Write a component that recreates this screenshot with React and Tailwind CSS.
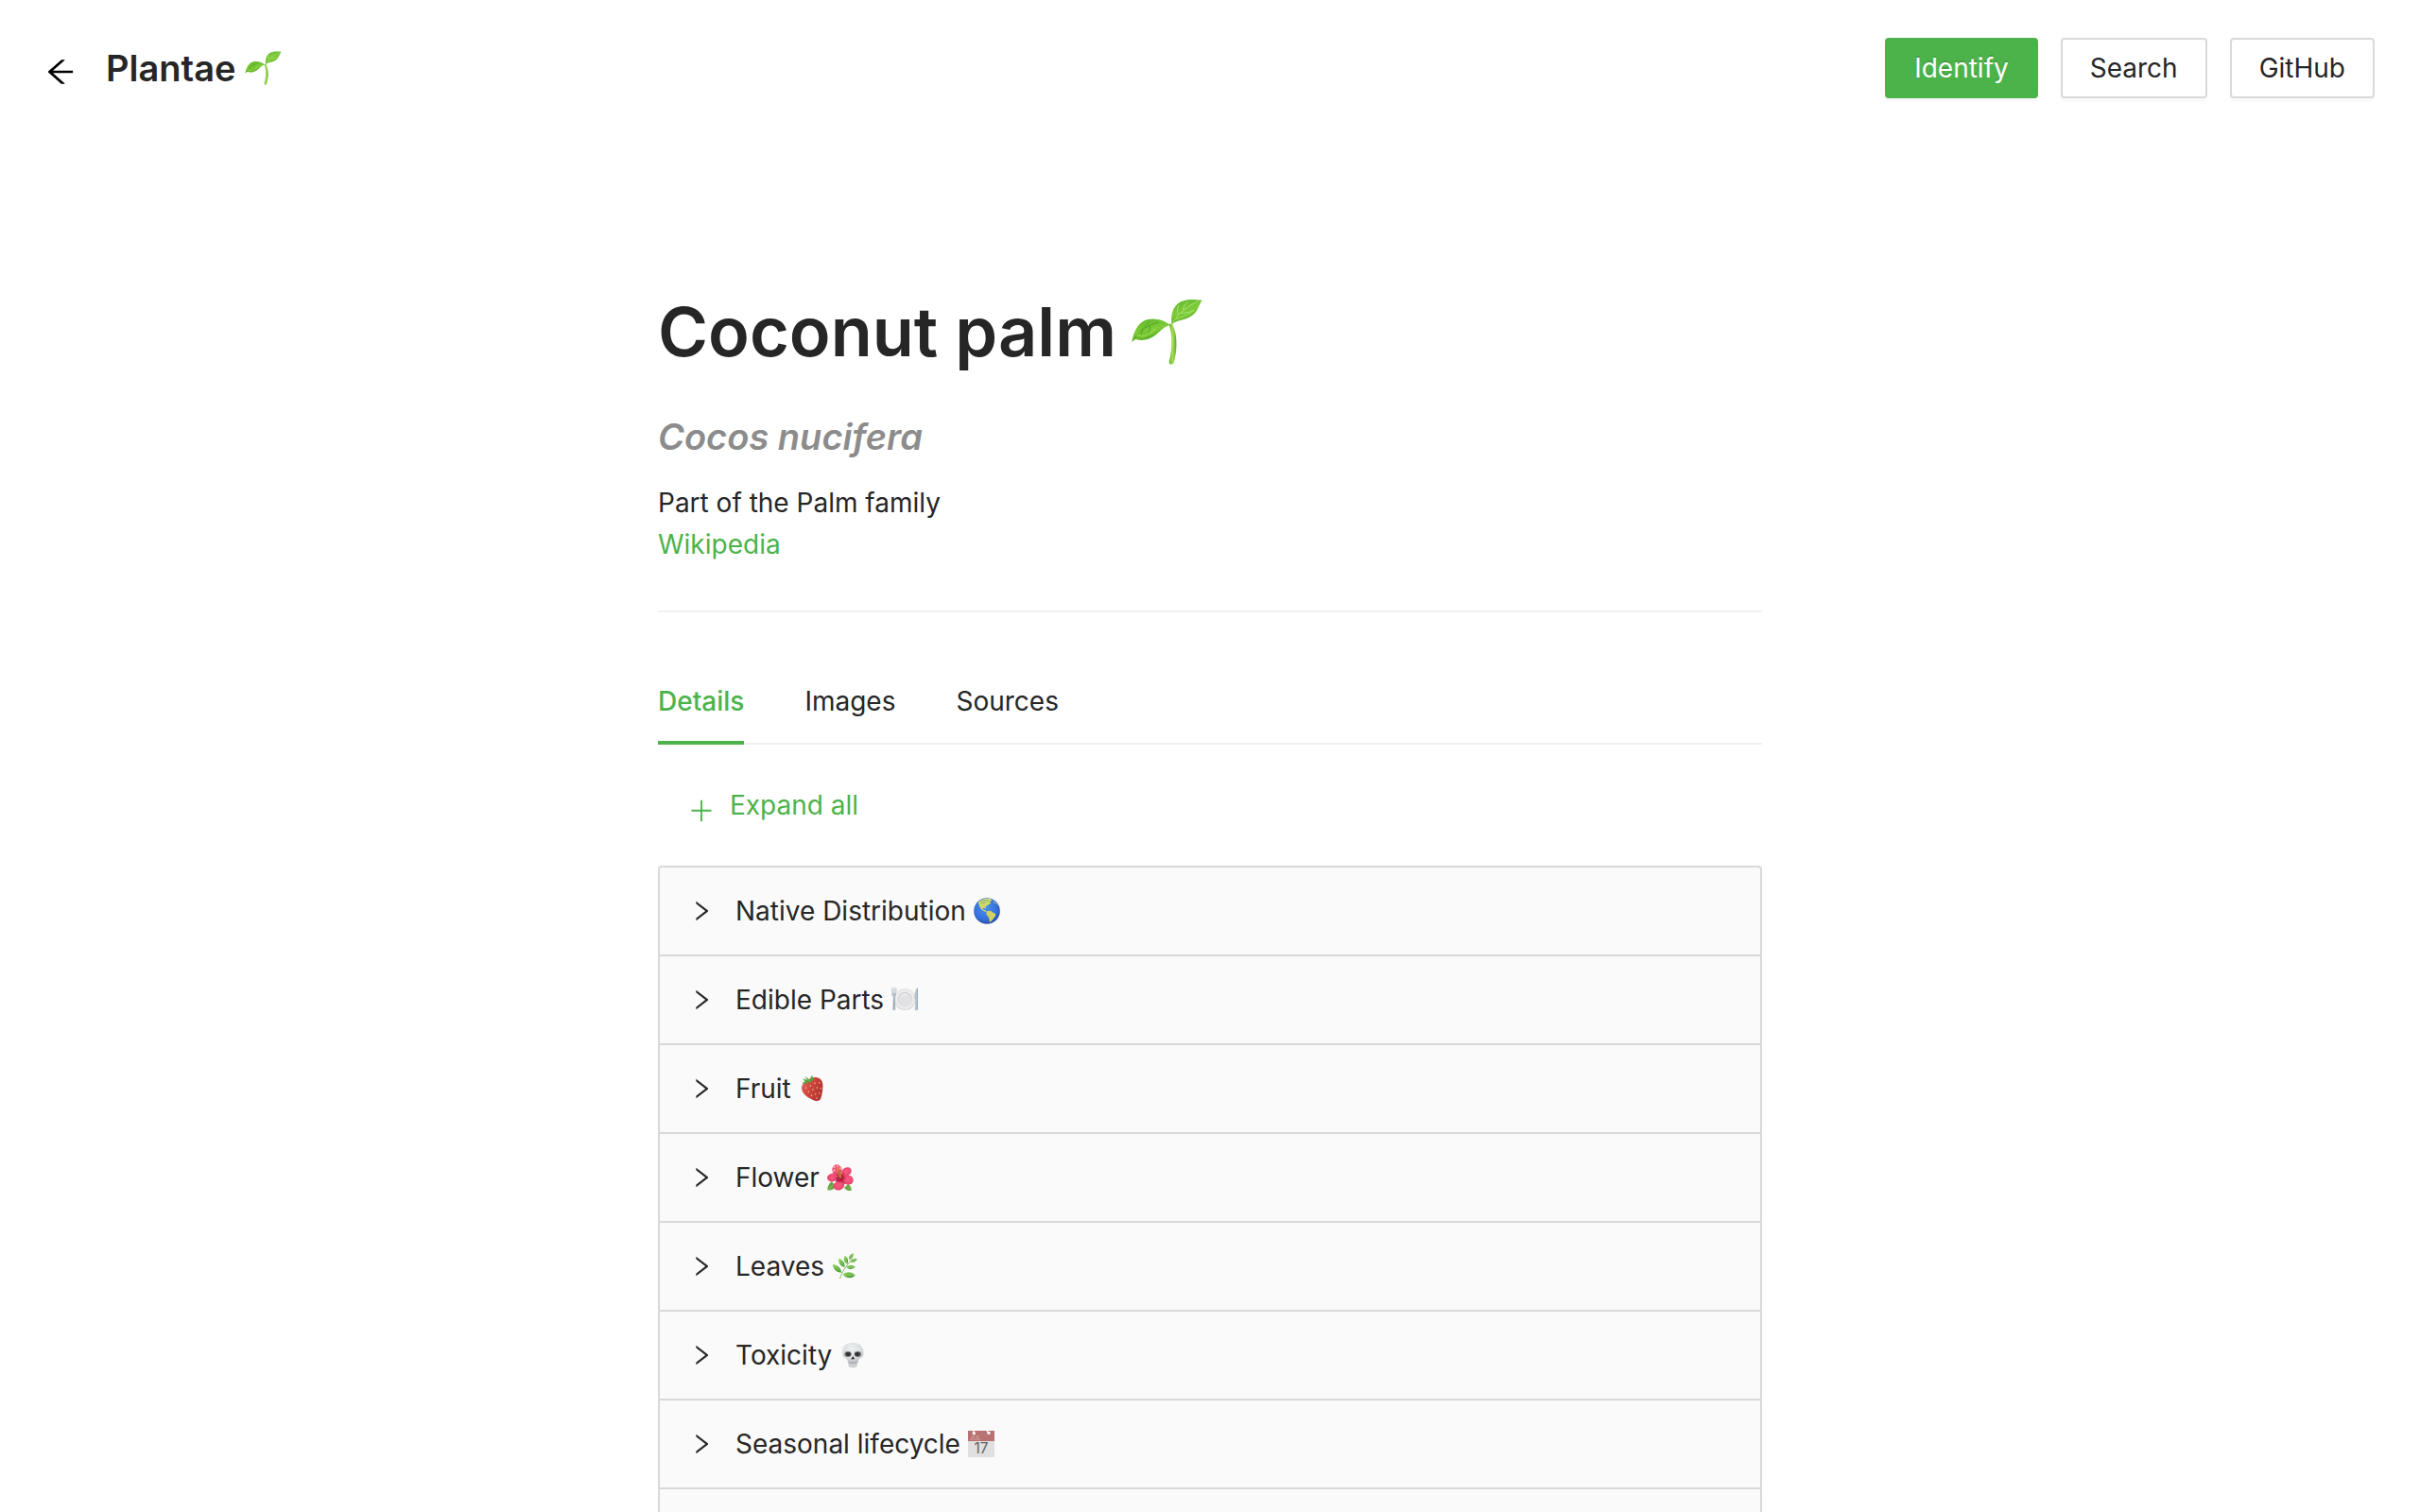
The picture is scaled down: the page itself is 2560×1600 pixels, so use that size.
import { useId, useState } from "react";

function Sprout({ className }) {
  const id = useId();
  return (
    <svg className={className} viewBox="64 52 225 210" aria-hidden="true">
      <defs>
        <linearGradient id={id + "a"} x1="0" y1="0" x2="0.4" y2="1">
          <stop offset="0" stopColor="#5cb52c" />
          <stop offset="0.55" stopColor="#7fcb38" />
          <stop offset="1" stopColor="#55a925" />
        </linearGradient>
        <linearGradient id={id + "b"} x1="0" y1="0" x2="1" y2="0">
          <stop offset="0" stopColor="#62b02b" />
          <stop offset="0.5" stopColor="#a2e052" />
          <stop offset="1" stopColor="#5da52a" />
        </linearGradient>
      </defs>
      <path d="M183 134C191 160 194 190 189 222C187 238 183 248 183 256C185 262 195 262 198 256C208 222 212 170 194 134C191 131 185 131 183 134Z" fill={`url(#${id}b)`} />
      <path d="M65 191C69 160 84 128 112 119C140 112 170 122 187 136C166 140 156 156 138 170C118 185 96 186 78 181C73 183 68 187 65 191Z" fill={`url(#${id}a)`} />
      <path d="M192 134C187 108 194 76 220 62C240 53 262 54 288 57C279 68 277 86 262 101C240 122 208 118 192 134Z" fill={`url(#${id}a)`} />
      <path d="M72 181C88 155 116 135 150 127M98 148C98 160 94 168 90 176M122 136C124 150 118 162 112 172M98 148C108 140 116 130 122 124" fill="none" stroke="#4b9c22" strokeWidth="2.5" />
      <path d="M196 127C212 100 240 76 276 61M212 103C208 92 208 84 214 74M228 88C228 78 234 68 242 62M222 98C238 98 252 94 262 88" fill="none" stroke="#b5e886" strokeWidth="2.5" />
      <path d="M84 168C100 176 122 166 138 150M208 116C232 108 250 102 260 90" fill="none" stroke="#9be24b" strokeWidth="7" strokeLinecap="round" opacity="0.6" />
    </svg>
  );
}

function Globe() {
  const id = useId();
  return (
    <>
      <defs>
        <radialGradient id={id} cx="0.45" cy="0.4" r="0.6">
          <stop offset="0" stopColor="#4b90ee" />
          <stop offset="0.7" stopColor="#3671dc" />
          <stop offset="1" stopColor="#2a4ea6" />
        </radialGradient>
      </defs>
      <circle cx="42" cy="42" r="41.5" fill={`url(#${id})`} />
      <path d="M14 15C24 5 38 1 52 3C56 5 60 8 56 11C50 9 50 15 55 18C50 22 46 20 44 25C39 26 37 29 39 34C35 31 29 32 29 36C33 38 37 40 42 44L38 45C30 42 23 37 20 30C17 26 17 20 14 15Z" fill="#cfd966" />
      <path d="M41 44C48 39 56 42 61 47C69 49 72 52 69 58C65 64 61 69 55 75C51 79 48 76 50 69C49 62 42 57 40 51Z" fill="#d3d35e" />
      <path d="M22 11L32 8L29 14L38 16L33 20L24 18Z" fill="#9cc86a" />
      <path d="M60 8C68 12 74 18 77 25L71 20L66 19Z" fill="#7fae9d" />
      <path d="M31 8L39 12M42 6L46 12" stroke="#4b84d4" strokeWidth="2" />
    </>
  );
}

function Plate() {
  return (
    <>
      <circle cx="43" cy="41" r="34" fill="#d4d4d6" />
      <circle cx="43" cy="40" r="32" fill="#ebebec" />
      <circle cx="43" cy="40" r="22" fill="#cdcdcf" />
      <circle cx="43" cy="41" r="20" fill="#e2e2e4" />
      <path d="M30 34C33 27 42 23 50 26" stroke="#f8f8f8" strokeWidth="3" fill="none" />
      <path d="M0 1H18V32H0Z" fill="#fafafa" />
      <path d="M1 4H4V20H7V4H10V20H13V4H16V23C16 29 13 31 12 33L13 73C12 77 5 77 4 73L6 33C4 31 1 29 1 23Z" fill="#b4bfca" />
      <path d="M8 34V72" stroke="#8796a5" strokeWidth="2" />
      <path d="M84 3C76 8 73 20 73 38L76 43L74 73C75 77 83 77 84 73Z" fill="#b9c6d2" />
      <path d="M82 6V72" stroke="#8a9bab" strokeWidth="2" />
    </>
  );
}

function Strawberry() {
  const id = useId();
  return (
    <>
      <defs>
        <linearGradient id={id} x1="0" y1="0" x2="1" y2="0.4">
          <stop offset="0" stopColor="#e2695a" />
          <stop offset="0.5" stopColor="#cf4640" />
          <stop offset="1" stopColor="#b43434" />
        </linearGradient>
      </defs>
      <path d="M9 37C13 23 34 7 50 6C62 5 75 13 76 27C77 43 75 60 69 75C64 83 53 82 43 77C27 70 7 56 9 37Z" fill={`url(#${id})`} />
      <path d="M8 20L20 21L13 10L26 15L21 4L32 12L36 14L39 3L44 1L43 9L52 11L43 16L36 24L28 21L23 28L20 24L10 30L15 22Z" fill="#57a13c" />
      <path d="M22 5L33 17" stroke="#82c35a" strokeWidth="3" />
      <g fill="#efb86c">
        <ellipse cx="23" cy="40" rx="2" ry="3" /><ellipse cx="37" cy="33" rx="2" ry="3" /><ellipse cx="51" cy="25" rx="2" ry="3" />
        <ellipse cx="65" cy="24" rx="2" ry="3" /><ellipse cx="31" cy="52" rx="2" ry="3" /><ellipse cx="45" cy="46" rx="2" ry="3" />
        <ellipse cx="58" cy="39" rx="2" ry="3" /><ellipse cx="70" cy="41" rx="2" ry="3" /><ellipse cx="41" cy="64" rx="2" ry="3" />
        <ellipse cx="53" cy="59" rx="2" ry="3" /><ellipse cx="65" cy="56" rx="2" ry="3" /><ellipse cx="57" cy="72" rx="2" ry="3" />
      </g>
    </>
  );
}

function Hibiscus() {
  const id = useId();
  return (
    <>
      <defs>
        <radialGradient id={id} cx="0.5" cy="0.45" r="0.6">
          <stop offset="0" stopColor="#f55c80" />
          <stop offset="0.75" stopColor="#ec4770" />
          <stop offset="1" stopColor="#c9284f" />
        </radialGradient>
      </defs>
      <path d="M1 82C1 72 5 62 14 55L28 70C22 80 12 84 1 82Z" fill="#66a544" />
      <path d="M77 83C78 76 74 68 66 64L54 74C60 83 69 86 77 83Z" fill="#66a544" />
      <path d="M5 80L20 64M75 81L62 70" stroke="#9acb6c" strokeWidth="2" />
      <path d="M24 30L60 30L66 60L30 66Z" fill="#b52148" />
      <g fill={`url(#${id})`}>
        <ellipse cx="31" cy="17" rx="15" ry="16" />
        <ellipse cx="61" cy="24" rx="17" ry="13" transform="rotate(-30 61 24)" />
        <ellipse cx="17" cy="42" rx="17" ry="13" transform="rotate(-10 17 42)" />
        <ellipse cx="67" cy="50" rx="16" ry="15" />
        <ellipse cx="37" cy="68" rx="18" ry="14" transform="rotate(-15 37 68)" />
      </g>
      <path d="M42 39L54 29M36 43L24 44M47 44L58 48M42 47L40 58" stroke="#b71f46" strokeWidth="3" />
      <circle cx="42" cy="40" r="7" fill="#a51d3c" />
      <path d="M41 42L34 12" stroke="#e08a48" strokeWidth="5" strokeLinecap="round" />
      <path d="M42 38L38 24" stroke="#b8762a" strokeWidth="9" strokeLinecap="round" />
      <g fill="#ff9d9e">
        <circle cx="23" cy="9" r="4" /><circle cx="34" cy="5" r="4" /><circle cx="22" cy="20" r="4" /><circle cx="43" cy="13" r="4" />
      </g>
    </>
  );
}

function Herb() {
  const id = useId();
  return (
    <>
      <defs>
        <linearGradient id={id} x1="0" y1="0" x2="0.6" y2="1">
          <stop offset="0" stopColor="#8fd45a" />
          <stop offset="1" stopColor="#4a9b35" />
        </linearGradient>
      </defs>
      <path d="M26 80C32 60 44 42 64 20" stroke="#7dbb58" strokeWidth="3" fill="none" strokeLinecap="round" />
      <g fill={`url(#${id})`}>
        <path d="M68 1C56 5 52 12 56 22C65 18 69 11 68 1Z" />
        <path d="M80 18C69 16 62 20 59 29C70 31 77 27 80 18Z" />
        <path d="M41 9C36 20 39 29 49 35C54 24 51 14 41 9Z" />
        <path d="M22 17C20 30 27 41 40 45C43 32 35 21 22 17Z" />
        <path d="M74 43C64 36 53 37 46 45C55 54 66 53 74 43Z" />
        <path d="M3 36C4 52 14 62 31 62C29 48 19 38 3 36Z" />
        <path d="M74 71C64 59 46 57 35 68C46 81 62 82 74 71Z" />
      </g>
      <path d="M7 39L29 60M25 21L38 42M43 13L48 32M66 5L57 20M77 19L61 28M71 44L48 46M70 70L38 69" stroke="#b5e48f" strokeWidth="1.5" />
    </>
  );
}

function Skull() {
  const id = useId();
  return (
    <>
      <defs>
        <radialGradient id={id} cx="0.45" cy="0.3" r="0.75">
          <stop offset="0" stopColor="#eef1f3" />
          <stop offset="0.6" stopColor="#dadde0" />
          <stop offset="1" stopColor="#b0b3b6" />
        </radialGradient>
      </defs>
      <path d="M27 61H58L56 77C52 83 33 83 29 77Z" fill="#d2d3d4" />
      <path d="M43 2C62 2 76 13 76 31C77 41 75 49 67 51C61 54 60 58 59 65C50 70 35 70 27 65C26 58 24 54 18 51C10 48 8 40 9 31C9 13 23 2 43 2Z" fill={`url(#${id})`} />
      <path d="M30 66H56" stroke="#98999b" strokeWidth="2" />
      <path d="M34 68V78M43 68V80M51 68V78" stroke="#b4b5b6" strokeWidth="1.5" />
      <ellipse cx="27" cy="39" rx="11" ry="9" fill="#727273" />
      <ellipse cx="28" cy="39" rx="8" ry="6" fill="#323233" />
      <ellipse cx="58" cy="39" rx="11" ry="9" fill="#727273" />
      <ellipse cx="57" cy="39" rx="8" ry="6" fill="#323233" />
      <path d="M43 46L48 54C46 57 44 54 43 54C41 55 39 57 37 54Z" fill="#222" />
    </>
  );
}

function CalendarPage() {
  return (
    <>
      <rect x="0" y="0" width="84" height="84" fill="#e0e0e0" />
      <path d="M0 0H84V33H0Z" fill="#b97273" />
      <path d="M17 0L19 8M60 0L66 8" stroke="#fafafa" strokeWidth="4" />
      <circle cx="19" cy="8" r="5" fill="#fafafa" />
      <circle cx="66" cy="7" r="5" fill="#fafafa" />
      <text x="6" y="29" fontSize="18" fill="#dbb0b0" className="font-['Inter']">JUL</text>
      <text x="42" y="73" fontSize="46" textAnchor="middle" fill="#606060" className="font-['Inter']">17</text>
    </>
  );
}

const outlines = {
  back: "M872 474H286.9l350.2-304c5.6-4.9 2.2-14-5.2-14h-88.5c-3.9 0-7.6 1.4-10.5 3.9L155 487.8a31.96 31.96 0 000 48.3L535.1 866c1.5 1.3 3.3 2 5.2 2h91.5c7.4 0 10.8-9.2 5.2-14L286.9 550H872c4.4 0 8-3.6 8-8v-60c0-4.4-3.6-8-8-8z",
  right: "M765.7 486.8L314.9 134.7A7.97 7.97 0 00302 141v77.3c0 4.9 2.3 9.6 6.1 12.6l360 281.1-360 281.1c-3.9 3-6.1 7.7-6.1 12.6V883c0 6.7 7.7 10.4 12.9 6.3l450.8-352.1a31.96 31.96 0 000-50.4z",
  plus: "M482 160q0-8 8-8h44q8 0 8 8v314h298q8 0 8 8v44q0 8-8 8H542v330q0 8-8 8h-44q-8 0-8-8V534H184q-8 0-8-8v-44q0-8 8-8h298z",
};

function Icon({ name, className }) {
  return (
    <svg className={className} viewBox="64 64 896 896" fill="currentColor" aria-hidden="true">
      <path d={outlines[name]} />
    </svg>
  );
}

const panels = [
  { title: "Native Distribution", Emoji: Globe },
  { title: "Edible Parts", Emoji: Plate },
  { title: "Fruit", Emoji: Strawberry },
  { title: "Flower", Emoji: Hibiscus },
  { title: "Leaves", Emoji: Herb },
  { title: "Toxicity", Emoji: Skull },
  { title: "Seasonal lifecycle", Emoji: CalendarPage },
];

const tabs = ["Details", "Images", "Sources"];

const buttonBase = "h-16 rounded border-2 px-[29px] shadow-[0_4px_0_rgba(0,0,0,0.02)]";

export default function App() {
  const [tab, setTab] = useState("Details");
  return (
    <div className="flex min-h-screen flex-col bg-white font-['Inter',sans-serif] text-[28px] leading-[44px] text-[#262626]">
      <header className="flex items-center justify-between px-12 py-10">
        <div className="flex items-center">
          <button type="button" aria-label="Back" className="mt-2 mr-8 text-black">
            <Icon name="back" className="size-8" />
          </button>
          <span className="text-[38px] leading-[64px] font-semibold">Plantae</span>
          <Sprout className="ml-2.5 h-9 w-[39px]" />
        </div>
        <nav className="flex gap-6">
          <button type="button" className={`${buttonBase} border-[#4cb34b] bg-[#4cb34b] text-white [text-shadow:0_-2px_0_rgba(0,0,0,0.12)]`}>Identify</button>
          <button type="button" className={`${buttonBase} border-[#d9d9d9] bg-white`}>Search</button>
          <button type="button" className={`${buttonBase} border-[#d9d9d9] bg-white`}>GitHub</button>
        </nav>
      </header>

      <main className="mx-auto flex w-full max-w-[1168px] flex-1 flex-col pt-40">
        <h1 className="flex items-center text-[72px] leading-[94px] font-semibold">
          Coconut palm
          <Sprout className="ml-4 h-[70px] w-[75px]" />
        </h1>
        <h2 className="mt-9 text-[38px] leading-[56px] font-semibold text-[#8c8c8c] italic">Cocos nucifera</h2>
        <p className="mt-5">Part of the Palm family</p>
        <a href="#wikipedia" className="self-start text-[#4cb34b]">Wikipedia</a>
        <hr className="mt-12 border-t-2 border-[#f0f0f0]" />

        <div role="tablist" className="mt-12 flex gap-16 shadow-[inset_0_-2px_0_#f0f0f0]">
          {tabs.map((name) => (
            <button
              key={name}
              type="button"
              role="tab"
              aria-selected={tab === name}
              onClick={() => setTab(name)}
              className={`border-b-4 pt-6 pb-5 ${tab === name ? "border-[#4cb34b] font-medium text-[#4cb34b]" : "border-transparent"}`}
            >
              {name}
            </button>
          ))}
        </div>

        <button type="button" className="my-8 flex h-16 items-center gap-4 self-start px-8 text-[#4cb34b]">
          <Icon name="plus" className="mt-3 size-7" />
          Expand all
        </button>

        <div className="flex flex-1 flex-col rounded-t border-x-2 border-t-2 border-[#d9d9d9] bg-[#fafafa]">
          {panels.map(({ title, Emoji }) => (
            <button key={title} type="button" aria-expanded="false" className="flex items-center border-b-2 border-[#d9d9d9] py-6 pl-8 text-left">
              <Icon name="right" className="mr-6 size-6" />
              {title}
              <svg viewBox="0 0 84 84" className="ml-2 size-7" aria-hidden="true">
                <Emoji />
              </svg>
            </button>
          ))}
        </div>
      </main>
    </div>
  );
}
